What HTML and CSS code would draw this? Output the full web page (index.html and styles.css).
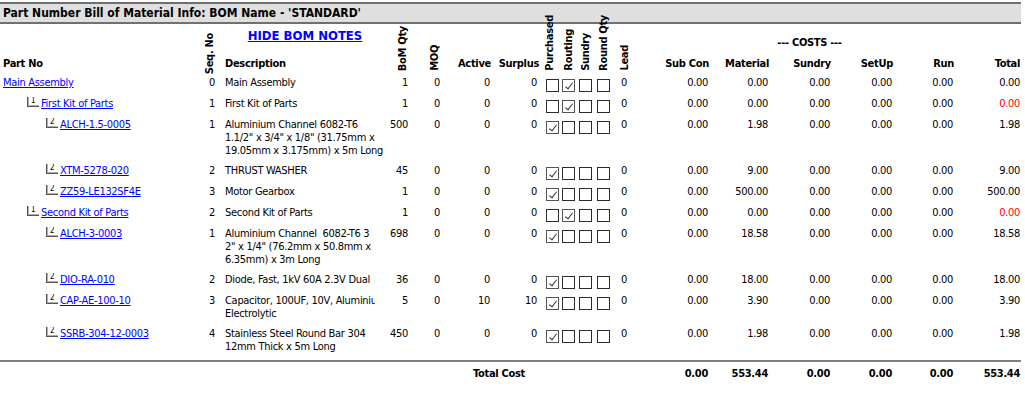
FILE: index.html
```html
<!DOCTYPE html>
<html>
<head>
<meta charset="utf-8">
<title>Part Number Bill of Material Info</title>
<link rel="stylesheet" href="styles.css">
</head>
<body>
<div class="page">
  <div class="titlebar">Part Number Bill of Material Info: BOM Name - 'STANDARD'</div>
  <table class="bom">
    <colgroup>
      <col class="w-part"><col class="w-seq"><col class="w-desc"><col class="w-qty"><col class="w-moq">
      <col class="w-active"><col class="w-surplus"><col class="w-pur"><col class="w-rou"><col class="w-sun">
      <col class="w-rnd"><col class="w-lead"><col class="w-subcon"><col class="w-mat"><col class="w-sund">
      <col class="w-setup"><col class="w-run"><col class="w-total">
    </colgroup>
    <thead>
      <tr class="hrow">
        <th></th>
        <th class="rot" rowspan="2"><div class="rotbox rotbox-low"><span class="vt">Seq. No</span></div></th>
        <th class="notes"><a href="#" class="notes-link">HIDE BOM NOTES</a></th>
        <th class="rot num" rowspan="2"><div class="rotbox"><span class="vt">BoM Qty</span></div></th>
        <th class="rot num" rowspan="2"><div class="rotbox"><span class="vt">MOQ</span></div></th>
        <th colspan="2"></th>
        <th class="rot mid" rowspan="2"><div class="rotbox"><span class="vt">Purchased</span></div></th>
        <th class="rot mid" rowspan="2"><div class="rotbox"><span class="vt">Routing</span></div></th>
        <th class="rot mid" rowspan="2"><div class="rotbox"><span class="vt">Sundry</span></div></th>
        <th class="rot mid" rowspan="2"><div class="rotbox"><span class="vt">Round Qty</span></div></th>
        <th class="rot mid" rowspan="2"><div class="rotbox"><span class="vt">Lead</span></div></th>
        <th class="costs" colspan="6">--- COSTS ---</th>
      </tr>
      <tr class="hrow">
        <th class="lbl-part">Part No</th>
        <th class="lbl-desc">Description</th>
        <th class="num">Active</th>
        <th class="num">Surplus</th>
        <th class="num">Sub Con</th>
        <th class="num">Material</th>
        <th class="num">Sundry</th>
        <th class="num">SetUp</th>
        <th class="num">Run</th>
        <th class="num last">Total</th>
      </tr>
    </thead>
    <tbody>
      <tr>
        <td class="part"><a href="#">Main Assembly</a></td>
        <td class="seq">0</td>
        <td class="desc">Main Assembly</td>
        <td class="num">1</td><td class="num">0</td><td class="num">0</td><td class="num sur">0</td>
        <td class="chk pur"><span class="cb"></span></td><td class="chk"><span class="cb on"></span></td><td class="chk"><span class="cb"></span></td><td class="chk"><span class="cb"></span></td>
        <td class="lead">0</td>
        <td class="num">0.00</td><td class="num">0.00</td><td class="num">0.00</td><td class="num">0.00</td><td class="num">0.00</td><td class="num last">0.00</td>
      </tr>
      <tr>
        <td class="part l1"><span class="tree">1</span><a href="#">First Kit of Parts</a></td>
        <td class="seq">1</td>
        <td class="desc">First Kit of Parts</td>
        <td class="num">1</td><td class="num">0</td><td class="num">0</td><td class="num sur">0</td>
        <td class="chk pur"><span class="cb"></span></td><td class="chk"><span class="cb on"></span></td><td class="chk"><span class="cb"></span></td><td class="chk"><span class="cb"></span></td>
        <td class="lead">0</td>
        <td class="num">0.00</td><td class="num">0.00</td><td class="num">0.00</td><td class="num">0.00</td><td class="num">0.00</td><td class="num last neg">0.00</td>
      </tr>
      <tr>
        <td class="part l2"><span class="tree">2</span><a href="#">ALCH-1.5-0005</a></td>
        <td class="seq">1</td>
        <td class="desc">Aluminium Channel 6082-T6<br>1.1/2" x 3/4" x 1/8" (31.75mm x<br>19.05mm x 3.175mm) x 5m Long</td>
        <td class="num">500</td><td class="num">0</td><td class="num">0</td><td class="num sur">0</td>
        <td class="chk pur"><span class="cb on"></span></td><td class="chk"><span class="cb"></span></td><td class="chk"><span class="cb"></span></td><td class="chk"><span class="cb"></span></td>
        <td class="lead">0</td>
        <td class="num">0.00</td><td class="num">1.98</td><td class="num">0.00</td><td class="num">0.00</td><td class="num">0.00</td><td class="num last">1.98</td>
      </tr>
      <tr>
        <td class="part l2"><span class="tree">2</span><a href="#">XTM-5278-020</a></td>
        <td class="seq">2</td>
        <td class="desc">THRUST WASHER</td>
        <td class="num">45</td><td class="num">0</td><td class="num">0</td><td class="num sur">0</td>
        <td class="chk pur"><span class="cb on"></span></td><td class="chk"><span class="cb"></span></td><td class="chk"><span class="cb"></span></td><td class="chk"><span class="cb"></span></td>
        <td class="lead">0</td>
        <td class="num">0.00</td><td class="num">9.00</td><td class="num">0.00</td><td class="num">0.00</td><td class="num">0.00</td><td class="num last">9.00</td>
      </tr>
      <tr>
        <td class="part l2"><span class="tree">2</span><a href="#">ZZ59-LE132SF4E</a></td>
        <td class="seq">3</td>
        <td class="desc">Motor Gearbox</td>
        <td class="num">1</td><td class="num">0</td><td class="num">0</td><td class="num sur">0</td>
        <td class="chk pur"><span class="cb on"></span></td><td class="chk"><span class="cb"></span></td><td class="chk"><span class="cb"></span></td><td class="chk"><span class="cb"></span></td>
        <td class="lead">0</td>
        <td class="num">0.00</td><td class="num">500.00</td><td class="num">0.00</td><td class="num">0.00</td><td class="num">0.00</td><td class="num last">500.00</td>
      </tr>
      <tr>
        <td class="part l1"><span class="tree">1</span><a href="#">Second Kit of Parts</a></td>
        <td class="seq">2</td>
        <td class="desc">Second Kit of Parts</td>
        <td class="num">1</td><td class="num">0</td><td class="num">0</td><td class="num sur">0</td>
        <td class="chk pur"><span class="cb"></span></td><td class="chk"><span class="cb on"></span></td><td class="chk"><span class="cb"></span></td><td class="chk"><span class="cb"></span></td>
        <td class="lead">0</td>
        <td class="num">0.00</td><td class="num">0.00</td><td class="num">0.00</td><td class="num">0.00</td><td class="num">0.00</td><td class="num last neg">0.00</td>
      </tr>
      <tr>
        <td class="part l2"><span class="tree">2</span><a href="#">ALCH-3-0003</a></td>
        <td class="seq">1</td>
        <td class="desc"><span class="clip">Aluminium Channel&nbsp; 6082-T6 3</span>2" x 1/4" (76.2mm x 50.8mm x<br>6.35mm) x 3m Long</td>
        <td class="num">698</td><td class="num">0</td><td class="num">0</td><td class="num sur">0</td>
        <td class="chk pur"><span class="cb on"></span></td><td class="chk"><span class="cb"></span></td><td class="chk"><span class="cb"></span></td><td class="chk"><span class="cb"></span></td>
        <td class="lead">0</td>
        <td class="num">0.00</td><td class="num">18.58</td><td class="num">0.00</td><td class="num">0.00</td><td class="num">0.00</td><td class="num last">18.58</td>
      </tr>
      <tr>
        <td class="part l2"><span class="tree">2</span><a href="#">DIO-RA-010</a></td>
        <td class="seq">2</td>
        <td class="desc"><span class="clip">Diode, Fast, 1kV 60A 2.3V Dual</span></td>
        <td class="num">36</td><td class="num">0</td><td class="num">0</td><td class="num sur">0</td>
        <td class="chk pur"><span class="cb on"></span></td><td class="chk"><span class="cb"></span></td><td class="chk"><span class="cb"></span></td><td class="chk"><span class="cb"></span></td>
        <td class="lead">0</td>
        <td class="num">0.00</td><td class="num">18.00</td><td class="num">0.00</td><td class="num">0.00</td><td class="num">0.00</td><td class="num last">18.00</td>
      </tr>
      <tr>
        <td class="part l2"><span class="tree">2</span><a href="#">CAP-AE-100-10</a></td>
        <td class="seq">3</td>
        <td class="desc"><span class="clip">Capacitor, 100UF, 10V, Aluminium</span>Electrolytic</td>
        <td class="num">5</td><td class="num">0</td><td class="num">10</td><td class="num sur">10</td>
        <td class="chk pur"><span class="cb on"></span></td><td class="chk"><span class="cb"></span></td><td class="chk"><span class="cb"></span></td><td class="chk"><span class="cb"></span></td>
        <td class="lead">0</td>
        <td class="num">0.00</td><td class="num">3.90</td><td class="num">0.00</td><td class="num">0.00</td><td class="num">0.00</td><td class="num last">3.90</td>
      </tr>
      <tr>
        <td class="part l2"><span class="tree">2</span><a href="#">SSRB-304-12-0003</a></td>
        <td class="seq">4</td>
        <td class="desc">Stainless Steel Round Bar 304<br>12mm Thick x 5m Long</td>
        <td class="num">450</td><td class="num">0</td><td class="num">0</td><td class="num sur">0</td>
        <td class="chk pur"><span class="cb on"></span></td><td class="chk"><span class="cb"></span></td><td class="chk"><span class="cb"></span></td><td class="chk"><span class="cb"></span></td>
        <td class="lead">0</td>
        <td class="num">0.00</td><td class="num">1.98</td><td class="num">0.00</td><td class="num">0.00</td><td class="num">0.00</td><td class="num last">1.98</td>
      </tr>
    </tbody>
    <tfoot>
      <tr class="totals">
        <td class="total-label" colspan="7">Total Cost</td>
        <td colspan="5"></td>
        <td class="num">0.00</td><td class="num">553.44</td><td class="num">0.00</td><td class="num">0.00</td><td class="num">0.00</td><td class="num last">553.44</td>
      </tr>
    </tfoot>
  </table>
</div>
</body>
</html>
```
FILE: styles.css
```css
html, body {
  margin: 0;
  padding: 0;
  background: #ffffff;
}

body {
  font-family: "DejaVu Sans Condensed", "Liberation Sans", Arial, sans-serif;
  font-stretch: condensed;
  font-size: 11px;
  line-height: 13px;
  color: #000000;
}

a {
  color: #0000ff;
  text-decoration: underline;
}

.page {
  width: 1021px;
}

.titlebar {
  margin-top: 2px;
  height: 18px;
  line-height: 18px;
  padding-left: 3px;
  background: #dfdfdf;
  border-top: 2px solid #707070;
  border-bottom: 2px solid #707070;
  font-weight: bold;
  font-size: 12px;
  white-space: nowrap;
}

.bom {
  width: 1021px;
  table-layout: fixed;
  border-collapse: collapse;
  border-spacing: 0;
  letter-spacing: -0.3px;
}

.w-part { width: 200px; }
.w-seq { width: 18px; }
.w-desc { width: 167px; }
.w-qty { width: 25px; }
.w-moq { width: 32px; }
.w-active { width: 50px; }
.w-surplus { width: 48px; }
.w-pur { width: 19px; }
.w-rou { width: 18px; }
.w-sun { width: 17px; }
.w-rnd { width: 18px; }
.w-lead { width: 24px; }
.w-subcon { width: 74px; }
.w-mat { width: 60px; }
.w-sund { width: 62px; }
.w-setup { width: 62px; }
.w-run { width: 61px; }
.w-total { width: 66px; }

/* header */
.hrow {
  height: 26px;
}

.bom th {
  font-weight: bold;
  font-size: 11px;
  line-height: 13px;
  text-align: left;
  vertical-align: bottom;
  padding: 0 0 6px 0;
  white-space: nowrap;
}

.bom th.num {
  text-align: right;
  padding-right: 1px;
}

.bom th.last {
  padding-right: 1px;
}

.bom th.lbl-part {
  padding-left: 3px;
}

.bom th.lbl-desc {
  padding-left: 7px;
}

.bom th.notes {
  vertical-align: top;
  text-align: center;
  padding: 4px 0 0 7px;
  letter-spacing: 0;
}

.notes-link {
  font-size: 13px;
  line-height: 15px;
  font-weight: bold;
}

.bom th.costs {
  text-align: center;
  padding: 0 38px 1px 0;
}

.bom th.rot {
  padding: 0 0 5px 0;
}

.rotbox {
  height: 47px;
  display: flex;
  flex-direction: column;
  justify-content: flex-end;
  align-items: center;
}

.rotbox-low {
  height: 50px;
  margin-bottom: -3px;
}

.bom th.rot.num .rotbox {
  align-items: flex-end;
  padding-right: 1px;
}

.vt {
  writing-mode: vertical-rl;
  transform: rotate(180deg);
  white-space: nowrap;
  line-height: 13px;
}

/* body rows */
.bom td {
  padding: 0 0 7px 0;
  vertical-align: top;
  line-height: 13px;
  white-space: nowrap;
  overflow: hidden;
}

.bom td.part {
  padding-left: 3px;
}

.bom td.l1 {
  padding-left: 27px;
}

.bom td.l2 {
  padding-left: 46px;
}

.tree {
  display: inline-block;
  overflow: hidden;
  box-sizing: border-box;
  width: 12px;
  height: 10px;
  margin-right: 2px;
  padding-left: 3px;
  border-left: 1px solid #555555;
  border-bottom: 1px solid #555555;
  box-shadow: inset 1px -1px 0 #b0b0b0;
  font-size: 8px;
  line-height: 8px;
  letter-spacing: 0;
  color: #000000;
  vertical-align: baseline;
}

.bom td.seq {
  text-align: right;
  padding-right: 3px;
}

.bom td.desc {
  padding-left: 7px;
}

.clip {
  display: block;
  width: 150px;
  overflow: hidden;
  white-space: nowrap;
}

.bom td.num {
  text-align: right;
  padding-right: 2px;
}

.bom td.sur {
  padding-right: 3px;
}

.bom td.last {
  padding-right: 1px;
}

.bom td.neg {
  color: #ff0000;
}

.bom td.chk {
  padding: 3px 0 5px 0;
  line-height: 0;
}

.bom td.chk.pur {
  padding-left: 5px;
}

.cb {
  display: block;
  position: relative;
  box-sizing: border-box;
  width: 13px;
  height: 13px;
  margin: 0 auto;
  border: 1px solid #2b2b2b;
  background: #ffffff;
}

.cb.on {
  border-color: #555555;
}

.cb.on::after {
  content: "";
  position: absolute;
  left: 4px;
  top: 1px;
  width: 3px;
  height: 7px;
  border: solid #3a3a3a;
  border-width: 0 1px 1px 0;
  transform: rotate(38deg);
}

.bom td.lead {
  text-align: center;
}

/* totals */
.totals td {
  border-top: 2px solid #808080;
  padding-top: 5px;
  font-weight: bold;
}

.bom td.total-label {
  text-align: right;
  padding-right: 15px;
}
```
